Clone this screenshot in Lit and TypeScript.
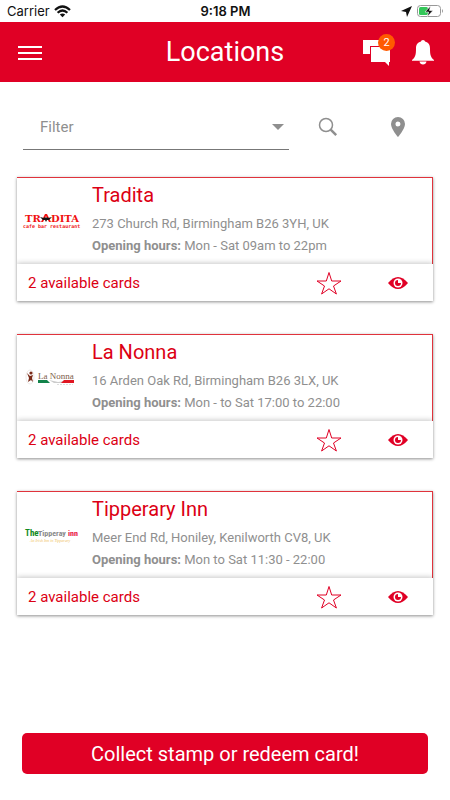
import { LitElement, html, css, svg } from "lit";
import { customElement, property } from "lit/decorators.js";

interface Place {
  id: string;
  name: string;
  address: string;
  hours: string;
  cards: number;
}

const places: Place[] = [
  { id: "tradita", name: "Tradita", address: "273 Church Rd, Birmingham B26 3YH, UK", hours: "Mon - Sat 09am to 22pm", cards: 2 },
  { id: "nonna", name: "La Nonna", address: "16 Arden Oak Rd, Birmingham B26 3LX, UK", hours: "Mon - to Sat 17:00 to 22:00", cards: 2 },
  { id: "tipperary", name: "Tipperary Inn", address: "Meer End Rd, Honiley, Kenilworth CV8, UK", hours: "Mon to Sat 11:30 - 22:00", cards: 2 },
];

const logos: Record<string, unknown> = {
  tradita: svg`
    <text x="2" y="13" font-family="DejaVu Serif, serif" font-weight="700" font-size="10" fill="#f01010">TR</text>
    <path d="M18 13l4-8h2l4 8h-2l-3-6-3 6z" fill="#f01010"/>
    <path d="M17 8l4 1 1-1 1 1 1-1 1 1 4-1-3 3h-2l-1 2-1-2h-2z" fill="#111"/>
    <text x="28" y="13" font-family="DejaVu Serif, serif" font-weight="700" font-size="10" fill="#f01010">DITA</text>
    <text x="0" y="19" font-family="DejaVu Sans Mono, monospace" font-weight="700" font-size="5" fill="#f02020">cafe bar restaurant</text>`,
  nonna: svg`
    <ellipse cx="7" cy="11" rx="4" ry="7" fill="none" stroke="#eeeae8"/>
    <circle cx="8" cy="7" r="1.6" fill="#7a2a18"/>
    <path d="M4 7l3 3 3-1-1 3 1 4-2-2-3 2 1-4z" fill="#7a2a18"/>
    <text x="15" y="13" font-family="Liberation Serif, serif" font-size="9" fill="#80604a">La Nonna</text>
    <path d="M15 14h9l3 3H15z" fill="#13834a"/>
    <path d="M26 14l5 3h8l3-2-7 1z" fill="#ccc"/>
    <path d="M51 14H41l-3 3h13z" fill="#e01622"/>
    <path d="M34 18.500h16" stroke="#ddd" stroke-dasharray="2 1"/>`,
  tipperary: svg`
    <g font-family="Liberation Sans Narrow, Roboto Condensed, Roboto, sans-serif" font-weight="700">
      <text x="2" y="13" font-size="9" fill="#128a20">The</text>
      <text x="15" y="13" font-size="8" fill="#8a8a8a">Tipperay</text>
      <text x="45" y="13" font-size="8" fill="#e8103c">inn</text>
    </g>
    <text x="7" y="19" font-family="Liberation Serif, serif" font-style="italic" font-size="4" fill="#efc060">An Irish Inn in Tipperary</text>`,
};

@customElement("place-card")
export class PlaceCard extends LitElement {
  @property({ attribute: false }) place!: Place;

  static styles = css`
    :host { display: block; background: #fff; box-shadow: 0 1px 3px rgba(0, 0, 0, 0.45); }
    .info {
      display: grid;
      grid-template-columns: 60px 1fr;
      column-gap: 8px;
      min-height: 87px;
      padding-left: 6px;
      box-sizing: border-box;
      border-top: 1px solid #e0333c;
      border-right: 1px solid #e0333c;
    }
    .logo { align-self: center; width: 60px; height: 24px; overflow: visible; }
    h2 { margin: 3px 0 4px; font-size: 20px; line-height: 28px; font-weight: 400; color: #dc0014; }
    .text { padding-left: 1px; }
    p { margin: 0; font-size: 13px; line-height: 22px; color: #8f8f8f; white-space: nowrap; }
    b { font-weight: 700; }
    .bar {
      display: flex;
      align-items: center;
      height: 37px;
      padding: 0 19px 0 11px;
      background: #fff;
      box-shadow: 0 -1px 5px rgba(0, 0, 0, 0.22);
      clip-path: inset(-8px 0 0 0);
    }
    .count { flex: 1; font-size: 15px; color: #dc0014; }
    button { display: grid; place-items: center; width: 32px; height: 32px; margin-left: 37px; padding: 0; border: 0; background: none; color: #e00025; }
    button svg { display: block; }
  `;

  render() {
    const p = this.place;
    return html`
      <div class="info">
        <svg class="logo" viewBox="0 0 60 24" role="img" aria-label=${p.name}>${logos[p.id]}</svg>
        <div class="text">
          <h2>${p.name}</h2>
          <p>${p.address}</p>
          <p><b>Opening hours:</b> ${p.hours}</p>
        </div>
      </div>
      <div class="bar">
        <span class="count">${p.cards} available cards</span>
        <button aria-label="Add to favourites">
          <svg width="26" height="26" viewBox="0 0 26 26"><path d="M13 2.500l2.700 8.500H25l-7.500 5 2.900 8L13 18.800 5.600 24l2.900-8L1 11h9.300z" fill="none" stroke="currentColor"/></svg>
        </button>
        <button aria-label="View cards">
          <svg width="22" height="14" viewBox="0 0 22 14">
            <path d="M1 7Q11-5 21 7 11 19 1 7z" fill="currentColor"/>
            <circle cx="11" cy="7" r="4.500" fill="#fff"/>
            <path d="M11 4v3h3a3 3 0 1 1-3-3z" fill="currentColor"/>
          </svg>
        </button>
      </div>`;
  }
}

@customElement("app-root")
export class AppRoot extends LitElement {
  static styles = css`
    :host { display: flex; flex-direction: column; min-height: 100vh; background: #fff; font-family: Roboto, sans-serif; }
    button { padding: 0; border: 0; background: none; color: inherit; font: inherit; }
    svg { display: block; }
    .status { display: grid; grid-template-columns: 1fr auto 1fr; align-items: center; height: 22px; padding: 0 6px 0 7px; font: 13px Inter, sans-serif; color: #111; }
    .carrier { display: flex; align-items: center; gap: 4px; }
    .time { font-weight: 600; }
    .power { display: flex; align-items: center; justify-content: flex-end; gap: 5px; }
    header { display: grid; grid-template-columns: 1fr auto 1fr; align-items: center; height: 60px; padding: 0 16px; background: #e00025; color: #fff; }
    header > button { justify-self: start; padding-left: 2px; }
    h1 { margin: 0; font-size: 27px; font-weight: 400; }
    .tools { display: flex; justify-content: flex-end; align-items: center; gap: 21px; }
    .chat { position: relative; }
    .badge { position: absolute; top: -4px; right: -4px; width: 17px; border-radius: 9px; background: #ff5a00; font-size: 11px; line-height: 17px; text-align: center; }
    .filter { display: flex; align-items: center; padding: 22px 42px 0 23px; color: #8f8f8f; }
    .field { flex: 1; display: grid; align-items: center; border-bottom: 1px solid #777; }
    .field > * { grid-area: 1 / 1; }
    select { appearance: none; width: 100%; height: 45px; padding: 0 17px; border: 0; border-radius: 0; background: none; color: #8f8f8f; font: 15px Roboto, sans-serif; }
    .arrow { justify-self: end; margin-right: 5px; pointer-events: none; }
    .search { margin-left: 29px; }
    .pin { margin-left: 50px; }
    main { display: grid; gap: 33px; padding: 27px 17px 24px; }
    footer { margin-top: auto; padding: 0 22px 26px; }
    .collect { width: 100%; height: 41px; border-radius: 5px; background: #e00025; color: #fff; font-size: 20px; }
  `;

  render() {
    return html`
      <div class="status">
        <span class="carrier">Carrier
          <svg width="17" height="13" viewBox="0 0 17 13" fill="none" stroke="#111" stroke-width="2.200">
            <path d="M1 5Q8.500-2 16 5M3.600 7.800Q8.500 3.200 13.400 7.800"/><path d="M5.800 9.600Q8.500 7.400 11.200 9.600L8.500 12.300z" fill="#111" stroke="none"/>
          </svg>
        </span>
        <span class="time">9:18 PM</span>
        <span class="power">
          <svg width="11" height="11" viewBox="0 0 11 11"><path d="M11 0L6 11 5 6 0 5z" fill="#111"/></svg>
          <svg width="27" height="12" viewBox="0 0 27 12">
            <rect x=".5" y=".5" width="23" height="11" rx="3" fill="#fff" stroke="#999"/>
            <rect x="2" y="2" width="9" height="8" rx="1.500" fill="#34c759"/>
            <path d="M13.500 1L8 7h3.500l-1 4.500L16 5.500h-3.500z" fill="#111" stroke="#fff" stroke-width=".6"/>
            <path d="M25 4q2 2 0 4z" fill="#999"/>
          </svg>
        </span>
      </div>
      <header>
        <button aria-label="Menu">
          <svg width="24" height="16" viewBox="0 0 24 16"><path d="M0 3h24M0 9h24M0 15h24" stroke="#fff" stroke-width="2"/></svg>
        </button>
        <h1>Locations</h1>
        <div class="tools">
          <button class="chat" aria-label="Messages">
            <svg width="28" height="28" viewBox="0 0 28 28" fill="#fff">
              <path d="M0 2h18v6H7v8H0z"/><path d="M8 9h19v15h-1v4l-4-4H8z"/>
            </svg>
            <span class="badge">2</span>
          </button>
          <button aria-label="Notifications">
            <svg width="22" height="26" viewBox="0 0 22 26" fill="#fff">
              <path d="M11 1c1.200 0 2 .8 2 1.600 3.700.9 5 3.600 5 6.900 0 6.500.6 8.600 4 11.500v.8H0V21c3.400-2.900 4-5 4-11.500 0-3.300 1.300-6 5-6.900C9 1.800 9.800 1 11 1zM7.500 22.500h7c-.3 1.700-1.700 3-3.500 3s-3.200-1.300-3.500-3z"/>
            </svg>
          </button>
        </div>
      </header>
      <div class="filter">
        <div class="field">
          <select aria-label="Filter"><option>Filter</option></select>
          <svg class="arrow" width="12" height="6" viewBox="0 0 12 6"><path d="M0 0h12L6 6z" fill="#8f8f8f"/></svg>
        </div>
        <button class="search" aria-label="Search">
          <svg width="20" height="20" viewBox="0 0 20 20" fill="none" stroke="#8f8f8f"><circle cx="8" cy="8" r="6.500" stroke-width="1.500"/><path d="M12.700 12.700l5.500 5.500" stroke-width="2.500"/></svg>
        </button>
        <button class="pin" aria-label="Show map">
          <svg width="20" height="20" viewBox="0 0 20 20"><path d="M10 0a7 7 0 0 1 7 7c0 5-7 13-7 13S3 12 3 7a7 7 0 0 1 7-7zm0 4.500a2.500 2.500 0 1 0 0 5 2.500 2.500 0 0 0 0-5z" fill="#8f8f8f"/></svg>
        </button>
      </div>
      <main>${places.map((p) => html`<place-card .place=${p}></place-card>`)}</main>
      <footer><button class="collect">Collect stamp or redeem card!</button></footer>`;
  }
}
